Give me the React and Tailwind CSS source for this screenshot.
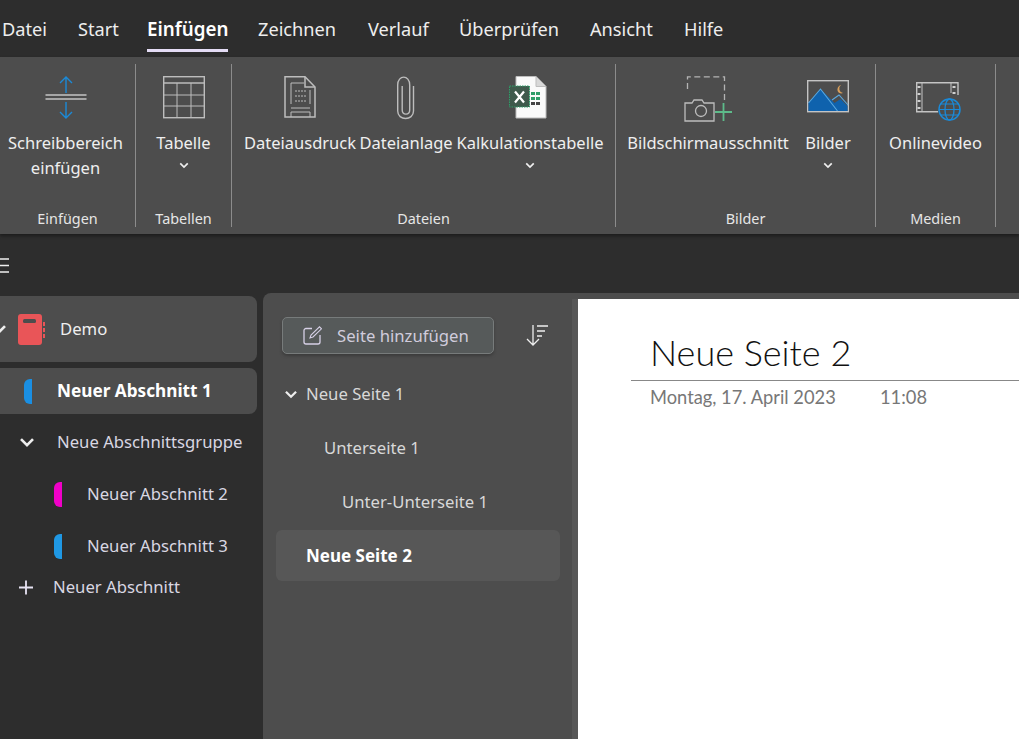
const tabs = [
  { name: "Datei", w: "w-[76px]" },
  { name: "Start", w: "w-[69px]" },
  { name: "Einfügen", w: "w-[111px]", active: true },
  { name: "Zeichnen", w: "w-[110px]" },
  { name: "Verlauf", w: "w-[91px]" },
  { name: "Überprüfen", w: "w-[131px]" },
  { name: "Ansicht", w: "w-[94px]" },
  { name: "Hilfe", w: "w-[60px]" },
];

const Chevron = ({ className = "" }) => (
  <svg viewBox="0 0 12 8" className={className} fill="none" stroke="currentColor" strokeWidth="2">
    <path d="M1.500 1.500 6 6l4.500-4.500" />
  </svg>
);

const InsertSpaceIcon = () => (
  <svg width="42" height="46" viewBox="0 0 42 46" fill="none">
    <path d="M0.500 19h41M0.500 23h41" stroke="#c4c4c4" strokeWidth="1.300" />
    <path d="M21 1v16M15 7l6-6 6 6M21 26v16M15 36l6 6 6-6" stroke="#1b8ad8" strokeWidth="1.400" />
  </svg>
);

const TableIcon = () => (
  <svg width="42" height="46" viewBox="0 0 42 46" fill="none" stroke="#bdbdbd" strokeWidth="1.400">
    <rect x="0.700" y="0.700" width="40.600" height="41" />
    <path d="M1 7h40" strokeWidth="1.600" />
    <path d="M1 19h40M1 30h40M14 7v35M28 7v35" strokeWidth="1" />
  </svg>
);

const PrintoutIcon = () => (
  <svg width="32" height="46" viewBox="0 0 32 46" fill="none" stroke="#bdbdbd" strokeWidth="1.500">
    <path d="M1 .8h20L31 11v30H1z" />
    <path d="M21 1v10h10" />
    <path d="M7 28V7h13M26 14v14M7 32h19M7 41v-5h19v5" strokeWidth="1" />
    <path d="M11 15h11M11 20h11M11 25h11" strokeWidth="1" strokeDasharray="2 1" />
  </svg>
);

const ClipIcon = () => (
  <svg width="18" height="46" viewBox="0 0 18 46" fill="none" stroke="#bdbdbd" strokeWidth="1.400">
    <path d="M16.500 10v25c0 10-15.800 10-15.800 0V9c0-10.500 12-10.500 12 0v25c0 5.500-7.500 5.500-7.500 0V10" />
  </svg>
);

const ExcelIcon = () => (
  <svg width="42" height="46" viewBox="0 0 42 46" fill="none">
    <path d="M7 .5h20l10 10V42H7z" fill="#fafafa" stroke="#bdbdbd" />
    <path d="M27 .5v10h10" fill="#d8d8d8" stroke="#bdbdbd" />
    <rect x="0.500" y="10" width="20" height="21" fill="#3f5a4c" stroke="#2f9e69" strokeDasharray="1.500 1" />
    <path d="M6 15.500l9 11M15 15.500l-9 11" stroke="#fff" strokeWidth="2.200" />
    <path d="M22 16h4v3h-4zM27 16h4v3h-4zM22 21h4v3h-4zM27 21h4v3h-4z" fill="#2f9e69" />
    <path d="M22 26h4v3h-4zM27 26h4v3h-4z" fill="#444" />
  </svg>
);

const ScreenClipIcon = () => (
  <svg width="48" height="46" viewBox="0 0 48 46" fill="none">
    <path d="M3.500 13V.8h37V25" stroke="#b4b4b4" strokeWidth="1.300" strokeDasharray="6 3.500" />
    <path d="M1 45V27h7l2-3h8l2 3h10v18z" fill="#4d4d4d" stroke="#bdbdbd" strokeWidth="1.300" />
    <circle cx="17" cy="35" r="5.500" stroke="#bdbdbd" strokeWidth="1.300" />
    <path d="M31 36h17M39.500 27v18" stroke="#5dbb8a" strokeWidth="1.800" />
  </svg>
);

const PictureIcon = () => (
  <svg width="42" height="46" viewBox="0 0 42 46" fill="none">
    <rect x="0.700" y="4.700" width="40.600" height="31" stroke="#c4c4c4" strokeWidth="1.400" />
    <path d="M1.500 35V27l12-14 14 14 6-4 7 7v5z" fill="#0f62ad" />
    <path d="M1.500 27l12-14 17 22M25 24l7-5 9 10" stroke="#5aa9e0" strokeWidth="1.100" />
    <path d="M34 9a4.500 4.500 0 0 0 2 8c-3 1.500-6-1-5.500-4 .2-2 1.700-3.500 3.500-4z" fill="#d9a05b" />
  </svg>
);

const VideoIcon = () => (
  <svg width="50" height="46" viewBox="0 0 50 46" fill="none">
    <path d="M47 19V6.700H5.700v29H27" stroke="#c4c4c4" strokeWidth="1.400" />
    <path d="M11 7v29M40 7v10" stroke="#c4c4c4" strokeWidth="1" />
    <path d="M8 10v2M8 17v2M8 24v2M8 31v2M43 10v2M43 16v2" stroke="#d0d0d0" strokeWidth="3" />
    <circle cx="38.500" cy="33.500" r="10.500" fill="#4d4d4d" stroke="#1b8ad8" strokeWidth="1.500" />
    <ellipse cx="38.500" cy="33.500" rx="4.500" ry="10.500" stroke="#1b8ad8" strokeWidth="1.300" />
    <path d="M28 33.500h21M30 28h17M30 39h17" stroke="#1b8ad8" strokeWidth="1.200" />
  </svg>
);

const RibbonItem = ({ w, icon, label, second, chevron }) => (
  <div className={`${w} flex flex-col items-center pt-[12px]`}>
    <div className="flex h-[46px] items-start justify-center">{icon}</div>
    <div className="mt-[8px] whitespace-nowrap text-center text-[16.500px] leading-[25px] text-[#efefef]">
      {label}
      {second && <div>{second}</div>}
    </div>
    {chevron && <Chevron className="mt-[7px] h-[7px] w-[10px] text-[#efefef]" />}
  </div>
);

const RibbonGroup = ({ w, label, className = "", children }) => (
  <div className={`${w} flex flex-col border-r border-[#8c8c8c]`}>
    <div className={`flex flex-1 ${className}`}>{children}</div>
    <div className="h-[20px] text-center text-[14.400px] leading-[24px] text-[#e6e6e6]">{label}</div>
  </div>
);

const NotebookIcon = () => (
  <svg width="27" height="31" viewBox="0 0 27 31">
    <path d="M3 0h18a3 3 0 0 1 3 3v25a3 3 0 0 1-3 3H3a3 3 0 0 1-3-3V3a3 3 0 0 1 3-3z" fill="#e95558" />
    <rect x="5" y="5" width="13" height="4" rx="1.500" fill="#4d4d4d" />
    <path d="M25 8h2v4h-2zM25 14h2v4h-2zM25 20h2v4h-2z" fill="#e95558" />
  </svg>
);

const SectionTab = ({ color }) => (
  <div className={`h-[25px] w-[8px] shrink-0 rounded-l-[6px] ${color}`} />
);

export default function App() {
  return (
    <div className="flex h-[739px] w-[1019px] flex-col overflow-hidden bg-[#2d2d2d] font-['Noto_Sans',sans-serif]">
      {/* menu */}
      <div className="flex h-[57px] shrink-0 pl-[2px] pt-[16px]">
        {tabs.map((t) => (
          <div key={t.name} className={t.w}>
            <div
              className={`inline-block h-[36px] whitespace-nowrap pb-[8px] leading-[27px] ${
                t.active
                  ? "border-b-[3px] border-[#e4dcf5] text-[18.800px] font-semibold text-white"
                  : "text-[18.200px] text-[#eeeeee]"
              }`}
            >
              {t.name}
            </div>
          </div>
        ))}
      </div>

      {/* ribbon */}
      <div className="flex h-[177px] shrink-0 bg-[#4d4d4d] py-[7px] shadow-[0_2px_3px_#1c1c1c]">
        <RibbonGroup w="w-[136px]" label="Einfügen">
          <RibbonItem w="w-[131px]" icon={<InsertSpaceIcon />} label="Schreibbereich" second="einfügen" />
        </RibbonGroup>
        <RibbonGroup w="w-[96px]" label="Tabellen">
          <RibbonItem w="w-[95px]" icon={<TableIcon />} label="Tabelle" chevron />
        </RibbonGroup>
        <RibbonGroup w="w-[384px]" label="Dateien" className="pl-[12px]">
          <RibbonItem w="w-[112px]" icon={<PrintoutIcon />} label="Dateiausdruck" />
          <RibbonItem w="w-[100px]" icon={<ClipIcon />} label="Dateianlage" />
          <RibbonItem w="w-[148px]" icon={<ExcelIcon />} label="Kalkulationstabelle" chevron />
        </RibbonGroup>
        <RibbonGroup w="w-[260px]" label="Bilder" className="pl-[12px]">
          <RibbonItem w="w-[160px]" icon={<ScreenClipIcon />} label="Bildschirmausschnitt" />
          <RibbonItem w="w-[80px]" icon={<PictureIcon />} label="Bilder" chevron />
        </RibbonGroup>
        <RibbonGroup w="w-[120px]" label="Medien">
          <RibbonItem w="w-[119px]" icon={<VideoIcon />} label="Onlinevideo" />
        </RibbonGroup>
      </div>

      {/* toolbar row */}
      <div className="flex h-[59px] shrink-0 items-center">
        <svg width="9" height="15" viewBox="0 0 9 15" stroke="#eeeeee" strokeWidth="1.400" className="mt-[3px]">
          <path d="M0 1h9M0 7.500h9M0 14h9" />
        </svg>
      </div>

      <div className="flex min-h-0 flex-1">
        {/* sections */}
        <div className="w-[263px] shrink-0 pr-[6px] pt-[3px] text-[16.700px] text-[#d9d7e2]">
          <div className="flex h-[66px] items-center rounded-r-lg bg-[#4d4d4d]">
            <Chevron className="-ml-[9px] h-[11px] w-[16px] text-[#eeeeee]" />
            <div className="ml-[11px]"><NotebookIcon /></div>
            <span className="ml-[15px] text-[#efefef]">Demo</span>
          </div>
          <div className="mt-[6px] flex h-[46px] items-center rounded-r-lg bg-[#4d4d4d] pl-[24px]">
            <SectionTab color="bg-[#1a8fe3]" />
            <span className="ml-[25px] whitespace-nowrap text-[17.200px] font-bold text-white">Neuer Abschnitt 1</span>
          </div>
          <div className="mt-[2px] flex h-[52px] items-center pl-[19px]">
            <Chevron className="h-[11px] w-[16px] text-[#eeeeee]" />
            <span className="ml-[22px] whitespace-nowrap">Neue Abschnittsgruppe</span>
          </div>
          <div className="flex h-[52px] items-center pl-[54px]">
            <SectionTab color="bg-[#f000c8]" />
            <span className="ml-[25px]">Neuer Abschnitt 2</span>
          </div>
          <div className="flex h-[52px] items-center pl-[54px]">
            <SectionTab color="bg-[#1f98e4]" />
            <span className="ml-[25px]">Neuer Abschnitt 3</span>
          </div>
          <div className="flex h-[30px] items-center pl-[19px]">
            <svg width="14" height="15" viewBox="0 0 14 15" stroke="#e8e4f4" strokeWidth="1.800">
              <path d="M0 7.500h14M7 .5v14" />
            </svg>
            <span className="ml-[20px]">Neuer Abschnitt</span>
          </div>
        </div>

        {/* pages + canvas */}
        <div className="flex min-w-0 flex-1 rounded-tl-lg bg-[#4d4d4d] pt-[6px]">
          <div className="w-[309px] shrink-0 text-[16.700px] text-[#d8d8d8]">
            <div className="flex items-center pl-[19px] pr-[23px] pt-[18px]">
              <div className="flex h-[37px] w-[212px] items-center rounded-[5px] border border-[#777b7b] bg-[#565a5a] pl-[20px] shadow-[0_2px_3px_#3c3c3c]">
                <svg width="19" height="19" viewBox="0 0 19 19" fill="none" stroke="#d6d0e6" strokeWidth="1.300">
                  <path d="M9 2.500H3A2 2 0 0 0 1 4.500V16a2 2 0 0 0 2 2h12a2 2 0 0 0 2-2v-7" />
                  <path d="M7 12l1-3L16.500 .8l2 2L10 11z" strokeWidth="1.100" />
                </svg>
                <span className="ml-[15px] whitespace-nowrap text-[#d0ccdc]">Seite hinzufügen</span>
              </div>
              <svg width="23" height="23" viewBox="0 0 23 23" fill="none" stroke="#eeeeee" strokeWidth="1.300" className="ml-auto">
                <path d="M7 1v20M1 15l6 6 6-6M11 2h11M11 7h8M11 12h5" />
              </svg>
            </div>
            <div className="mt-[13px] flex h-[54px] items-center pl-[21px]">
              <Chevron className="h-[9px] w-[14px] text-[#eeeeee]" />
              <span className="ml-[8px]">Neue Seite 1</span>
            </div>
            <div className="flex h-[54px] items-center pl-[61px]">Unterseite 1</div>
            <div className="flex h-[54px] items-center pl-[79px]">Unter-Unterseite 1</div>
            <div className="ml-[13px] mt-[1px] flex h-[51px] w-[284px] items-center rounded-md bg-[#575757] pl-[30px] text-[17px] font-bold text-white">
              Neue Seite 2
            </div>
          </div>
          <div className="w-[6px] shrink-0 bg-[#575757]" />
          <div className="min-w-0 flex-1 bg-white pl-[53px] font-['Lato',sans-serif]">
            <div className="border-b border-[#888888] pl-[19px] pt-[30px] pb-[5px] text-[36px] font-light leading-[46px] text-[#111111]">
              Neue Seite 2
            </div>
            <div className="flex pl-[19px] text-[18.300px] leading-[32px] text-[#777777]">
              <span className="w-[230px]">Montag, 17. April 2023</span>
              <span>11:08</span>
            </div>
          </div>
        </div>
      </div>
    </div>
  );
}
